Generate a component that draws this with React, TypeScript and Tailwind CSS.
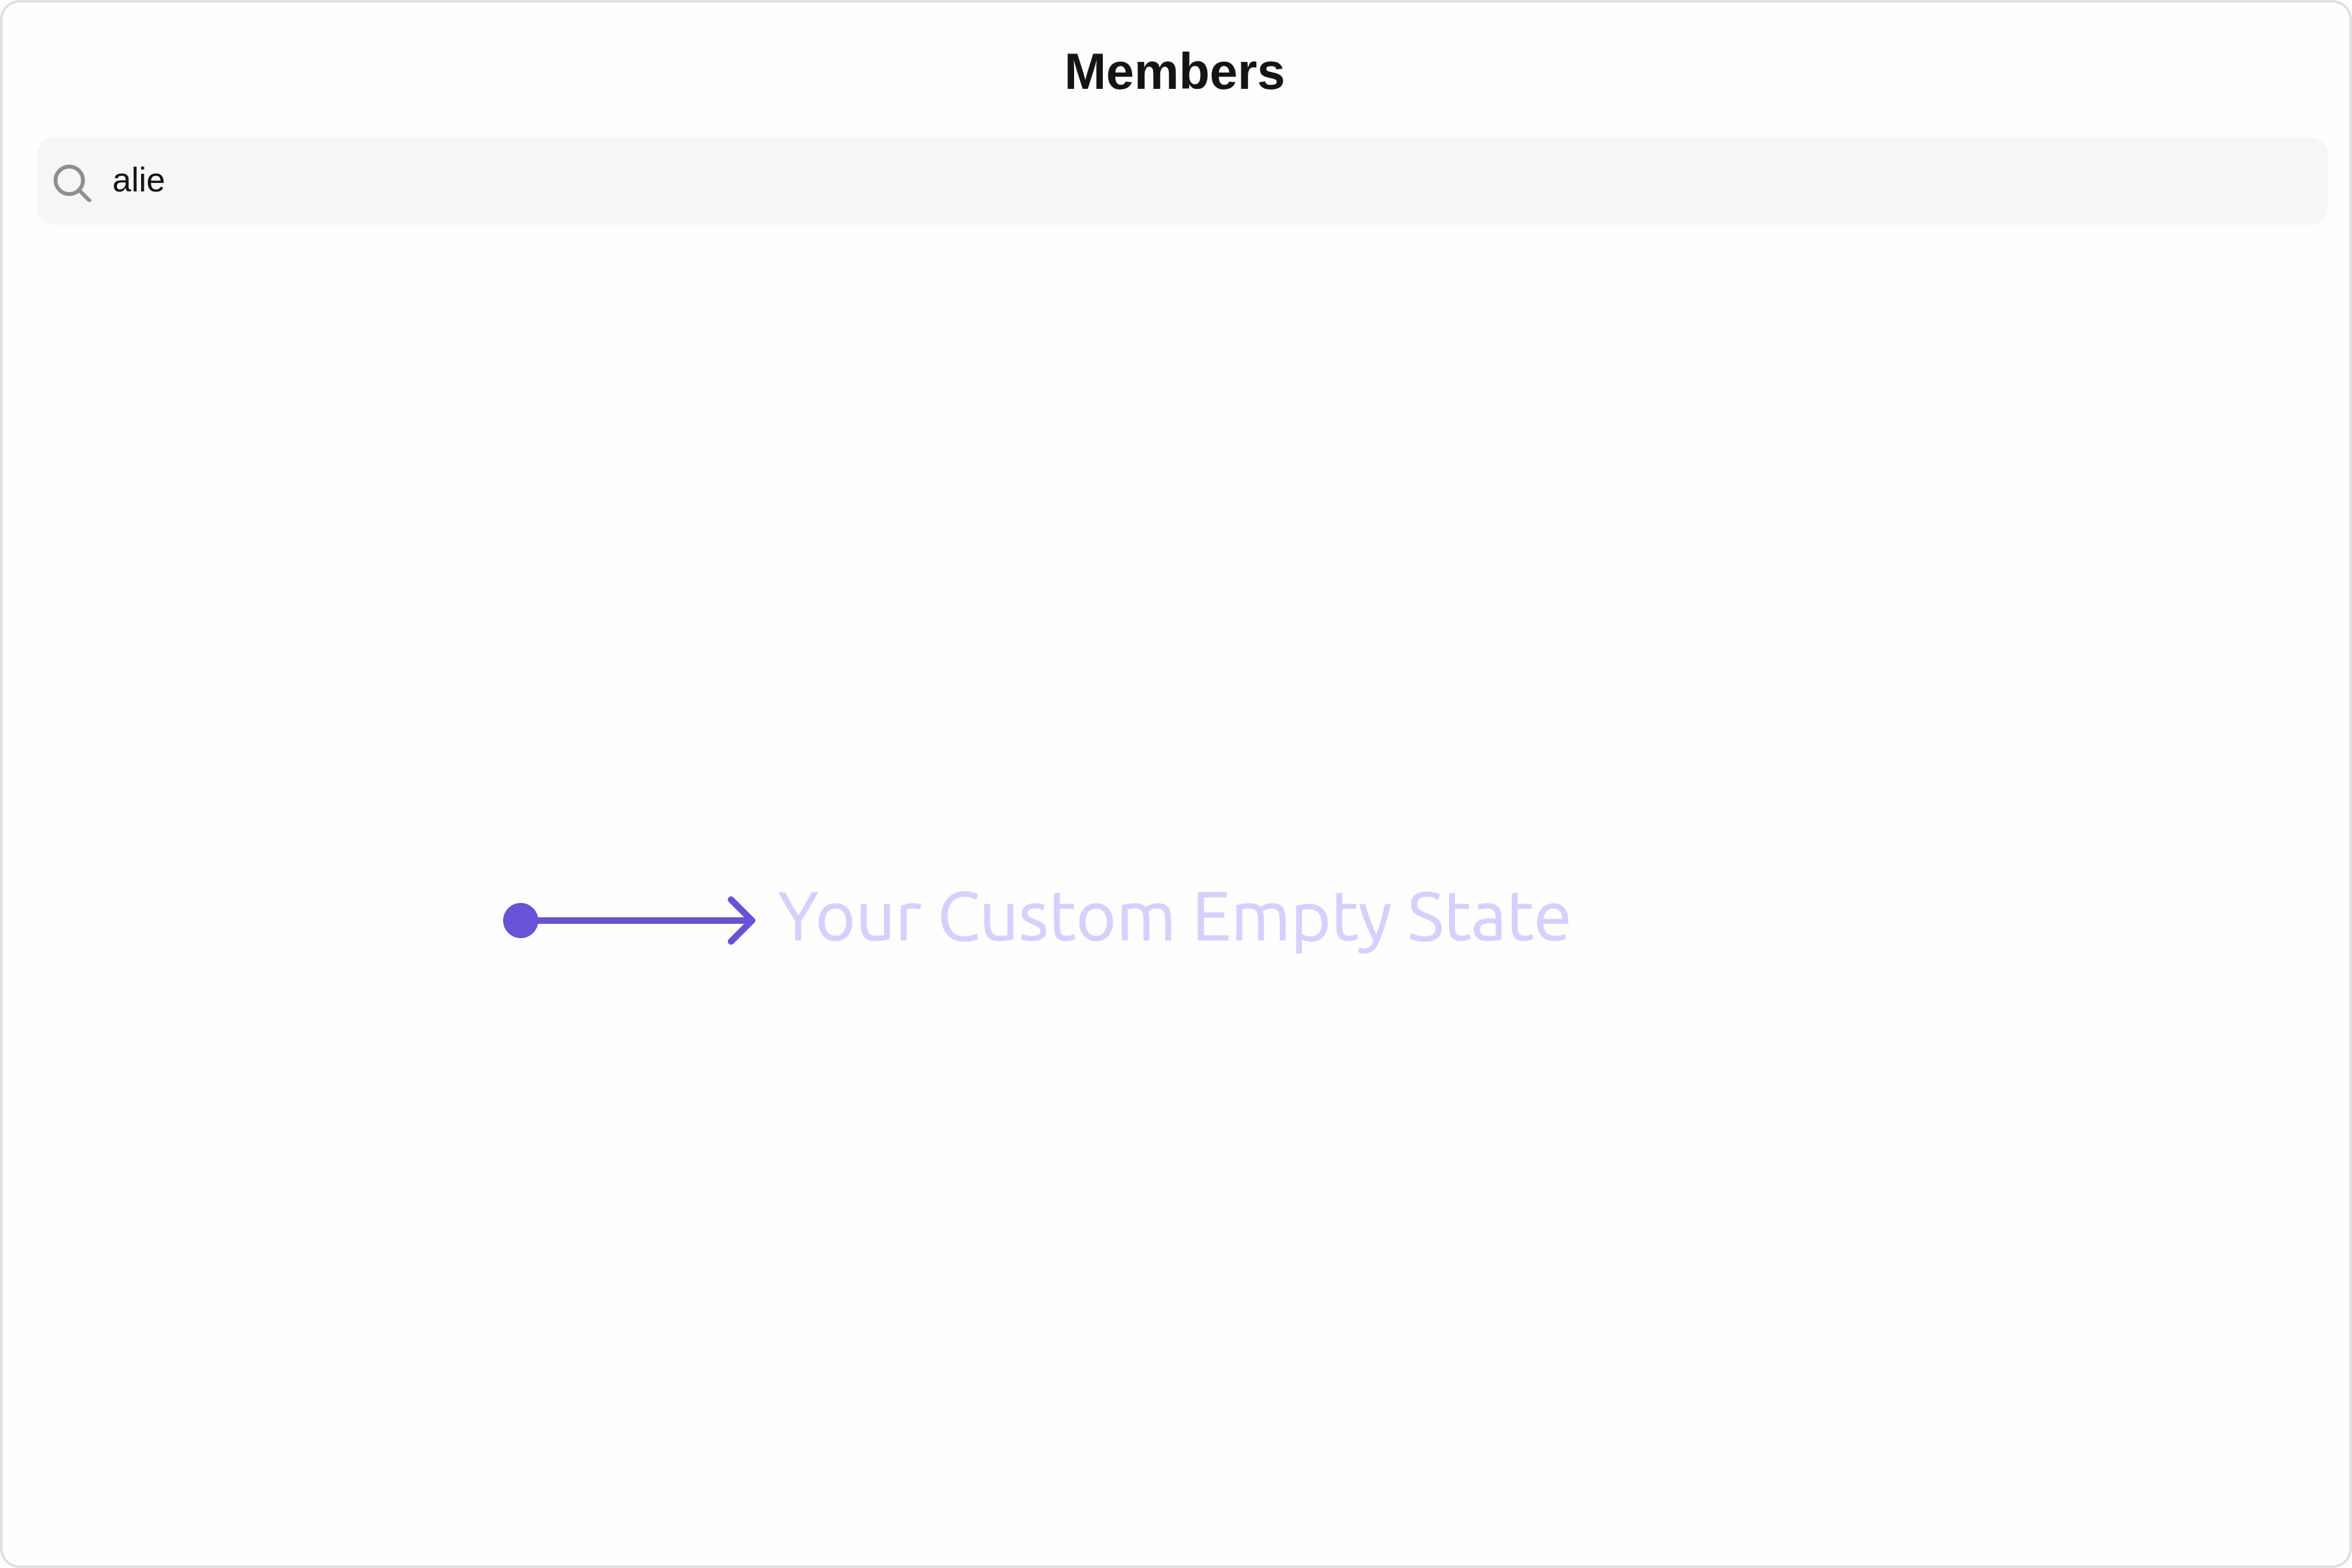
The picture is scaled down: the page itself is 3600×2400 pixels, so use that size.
function SearchIcon() {
  return (
    <svg
      className="size-16 shrink-0"
      viewBox="0 0 64 64"
      fill="none"
      stroke="#8f8f8f"
      strokeWidth="6"
      aria-hidden="true"
    >
      <circle cx="28" cy="31" r="21" />
      <path d="M43 46 L59 62" strokeLinecap="round" />
    </svg>
  );
}

function PointerArrow() {
  return (
    <svg
      className="h-20 w-[387px] shrink-0"
      viewBox="0 0 387 80"
      fill="none"
      stroke="#6852d6"
      strokeWidth="10"
      strokeLinecap="round"
      strokeLinejoin="round"
      aria-hidden="true"
    >
      <circle cx="27" cy="40" r="27" fill="#6852d6" stroke="none" />
      <path d="M27 40 H381" />
      <path d="M349 8 L381 40 L349 72" />
    </svg>
  );
}

export default function App() {
  return (
    <main className="flex min-h-screen flex-col rounded-[30px] border-4 border-[#e0e0e0] bg-[#fefefe] font-['Liberation_Sans',Arial,sans-serif] text-[#141414]">
      <h1 className="pt-[59px] pr-1 text-center text-[77px] leading-[92px] font-bold">Members</h1>
      <label className="mt-[55px] mr-[33px] ml-[52px] flex h-[134px] items-center gap-[30px] rounded-[27px] bg-[#f6f6f6] pl-[22px]">
        <SearchIcon />
        <input
          type="text"
          aria-label="Search members"
          defaultValue="alie"
          className="min-w-0 flex-1 bg-transparent pr-6 pb-1 text-[52px] leading-[60px] outline-none"
        />
      </label>
      <section className="flex flex-1 items-center justify-center gap-[34px] pt-[77px] pr-[424px]">
        <PointerArrow />
        <p className="pb-[18px] font-['Ubuntu','Noto_Sans',sans-serif] text-[106px] leading-[120px] whitespace-nowrap text-[#d8cfff] [-webkit-text-stroke:1px_#d8cfff]">
          Your Custom Empty State
        </p>
      </section>
    </main>
  );
}
